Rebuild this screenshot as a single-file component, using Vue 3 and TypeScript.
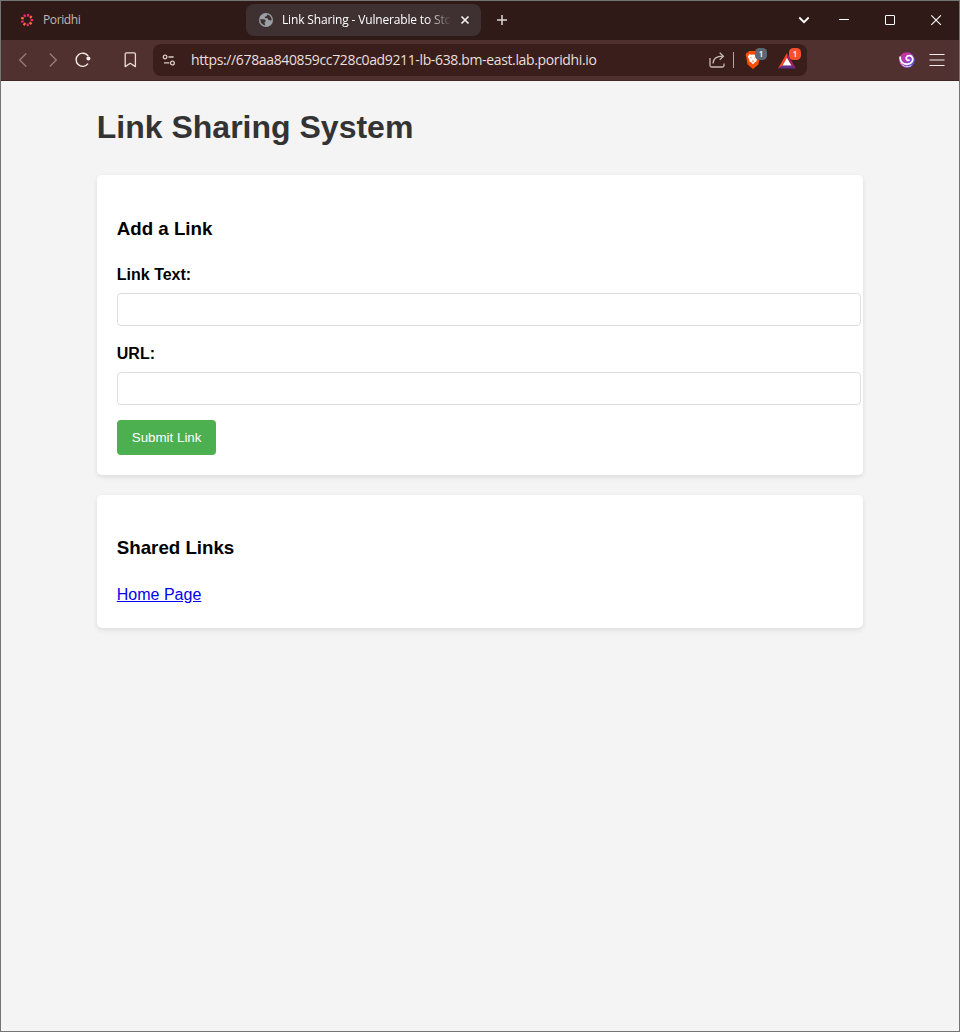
<script setup lang="ts">
import { ref } from 'vue'

interface SharedLink {
  label: string
  url: string
}

const address = 'https://678aa840859cc728c0ad9211-lb-638.bm-east.lab.poridhi.io'
const linkText = ref('')
const linkUrl = ref('')
const links = ref<SharedLink[]>([{ label: 'Home Page', url: '#' }])
const dots = Array.from({ length: 9 }, (_, i) => i * 40)

function submitLink(): void {
  if (!linkText.value || !linkUrl.value) return
  links.value.push({ label: linkText.value, url: linkUrl.value })
  linkText.value = ''
  linkUrl.value = ''
}
</script>

<template>
  <div class="window">
    <header class="tabstrip">
      <div class="tab">
        <svg class="fav" width="14" height="14" viewBox="0 0 14 14">
          <rect
            v-for="(a, i) in dots"
            :key="a"
            x="5.9"
            y="0.8"
            width="2.2"
            height="2.7"
            rx="0.5"
            :fill="i % 2 ? '#fa7040' : '#f4207c'"
            :transform="`rotate(${a + 12} 7 7)`"
          />
        </svg>
        <span class="tab-title dim">Poridhi</span>
      </div>
      <div class="tab active">
        <svg class="globe" width="16" height="16" viewBox="0 0 16 16">
          <circle cx="8" cy="8" r="7" fill="#9aa0a6" />
          <path d="M2.4 7.1 6.8 7.4 8 9 6.5 10.2 7.3 13.5C4 13 2 10.5 2.4 7.1Z" fill="#3f3132" />
          <path d="M9.4 2.6 8.5 4.2 6.7 4.8 7.2 6.3 9.3 6.1 10.5 8 13.6 8.5C13.9 5.6 12.1 3.3 9.4 2.6Z" fill="#3f3132" />
        </svg>
        <span class="tab-title fade">Link Sharing - Vulnerable to Sto</span>
        <svg class="close" width="10" height="10" viewBox="0 0 10 10">
          <path d="M1.5 1.5l7 7M8.5 1.5l-7 7" stroke="#f4eeee" stroke-width="1.7" />
        </svg>
      </div>
      <svg class="plus" width="12" height="12" viewBox="0 0 12 12">
        <path d="M6 1v10M1 6h10" stroke="#ded7d6" stroke-width="1.5" />
      </svg>
      <div class="controls">
        <svg width="43" height="38" viewBox="0 0 43 38">
          <path d="M18.3 16.5l4.7 4.7 4.7-4.7" fill="none" stroke="#fff" stroke-width="1.8" />
        </svg>
        <svg width="43" height="38" viewBox="0 0 43 38"><path d="M15 18.5h10" stroke="#fff" /></svg>
        <svg width="46" height="38" viewBox="0 0 46 38">
          <rect x="18.5" y="14.5" width="9" height="9" rx=".3" fill="none" stroke="#fff" />
        </svg>
        <svg width="46" height="38" viewBox="0 0 46 38">
          <path d="M18.3 14.3l9.6 9.6M27.9 14.3l-9.6 9.6" stroke="#fff" stroke-width="1.1" />
        </svg>
      </div>
    </header>

    <nav class="toolbar">
      <svg class="nav-icons" width="152" height="40" viewBox="0 0 152 40" fill="none">
        <path d="M25.2 13.5l-6.5 6.5 6.5 6.5" stroke="#967f7b" stroke-width="1.3" />
        <path d="M48.8 13.5l6.5 6.5-6.5 6.5" stroke="#967f7b" stroke-width="1.3" />
        <path d="M87 23.7a6.6 6.6 0 1 1 .2-7.6" stroke="#f8f0ee" stroke-width="1.4" />
        <circle cx="87.4" cy="18.4" r="2" fill="#f8f0ee" />
        <path
          d="M124.2 14.1a1.3 1.3 0 0 1 1.3-1.3h7.6a1.3 1.3 0 0 1 1.3 1.3v12.5l-5.1-3.3-5.1 3.3z"
          stroke="#e8dbd8"
          stroke-width="1.3"
          stroke-linejoin="round"
        />
      </svg>
      <div class="address">
        <svg class="tune" width="14" height="14" viewBox="0 0 14 14" fill="none" stroke="#d9cbc8" stroke-width="1.3">
          <circle cx="3.1" cy="4" r="1.8" />
          <path d="M6.4 4h5.3M2 9.9h5.3" />
          <circle cx="10.4" cy="10" r="1.9" />
        </svg>
        <span class="url">{{ address }}</span>
        <svg class="share" width="18" height="18" viewBox="0 0 18 18" fill="none" stroke="#c9bab7" stroke-width="1.3">
          <path d="M2 7v7.5a1.5 1.5 0 0 0 1.5 1.5h11a1.5 1.5 0 0 0 1.5-1.5V12.5" />
          <path d="M5 12.5c.1-4.9 3.1-7.3 9.8-7.3" />
          <path d="M11.7 1.7l3.7 3.5-3.7 3.7" />
        </svg>
        <i class="divider"></i>
        <div class="ext shield">
          <svg width="16" height="18" viewBox="0 0 16 18">
            <path d="M4 0h8l1 1.5 1.5.2 1 2.3-.6 1.3-1.5 8.2L8 18l-5.4-4.5L1.1 5.3.5 4l1-2.3L3 1.5z" fill="#fb4f04" />
            <path
              d="M4.3 3.2 6.4 3.8 8 3.5 9.6 3.8l2.1-.6 1.5 2.5-1.7 3.4.1 1.3-1.6.9-2 2-2-2-1.600-.9.1-1.300-1.700-3.400z"
              fill="#fff"
            />
            <path d="M4.800 6 6.700 6.700 6.400 7.500zM11.200 6 9.300 6.700l.3.8zM6.700 10 8 9.500l1.300.5L8 10.800z" fill="#fb4f04" />
          </svg>
          <b class="badge gray">1</b>
        </div>
        <div class="ext bat">
          <svg width="18" height="16" viewBox="0 0 18 16">
            <path d="M9 0 9 5.2 4.5 12.7 0 15.5z" fill="#ff4724" />
            <path d="M9 0 18 15.5 13.4 12.7 9 5.2z" fill="#9e1f63" />
            <path d="M0 15.5 4.5 12.5h9L18 15.5z" fill="#662d91" />
            <path d="M9 5 13.5 12.6h-9z" fill="#fff" />
          </svg>
          <b class="badge red">1</b>
        </div>
      </div>
      <svg class="swirl" width="16" height="16" viewBox="0 0 16 16">
        <defs>
          <linearGradient id="swirl" x1="0" y1="0" x2="1" y2=".8">
            <stop offset="0" stop-color="#e22d91" />
            <stop offset=".5" stop-color="#b036b8" />
            <stop offset="1" stop-color="#4858e8" />
          </linearGradient>
        </defs>
        <circle cx="8" cy="8" r="7.8" fill="url(#swirl)" />
        <path
          d="M1.200 4.500C.5 9.500 4.200 12.700 8.700 12.200c3.700-.4 5.700-3.300 4.800-6.200-.8-2.700-5.100-3.200-6.100-.5-.7 2.300 1.500 3.500 3.200 2.300"
          fill="none"
          stroke="#fff"
          stroke-width="1.8"
        />
        <path d="M1.700 10.800c2.300 4.100 6.800 5 10.700 2.800" fill="none" stroke="#fff" stroke-width=".8" />
      </svg>
      <svg class="menu" width="16" height="14" viewBox="0 0 16 14">
        <path d="M.5 1.500h15M.5 7h15M.5 12.500h15" stroke="#f3ebe9" stroke-width="1.200" />
      </svg>
    </nav>

    <main class="page">
      <h1>Link Sharing System</h1>
      <section class="card">
        <h3>Add a Link</h3>
        <form @submit.prevent="submitLink">
          <label for="text">Link Text:</label>
          <input id="text" v-model="linkText" type="text" />
          <label for="url">URL:</label>
          <input id="url" v-model="linkUrl" type="text" />
          <button type="submit">Submit Link</button>
        </form>
      </section>
      <section class="card">
        <h3>Shared Links</h3>
        <div v-for="link in links" :key="link.label">
          <a :href="link.url">{{ link.label }}</a>
        </div>
      </section>
    </main>
  </div>
</template>

<style>
body {
  margin: 0;
  background: #f4f4f4;
}
</style>

<style scoped>
.window {
  box-sizing: border-box;
  height: 1032px;
  border: 1px solid #747474;
  background: #f4f4f4;
  overflow: hidden;
}
svg {
  display: block;
  flex: none;
}
.tabstrip {
  display: flex;
  align-items: center;
  height: 39px;
  background: #301a17;
  font-family: 'Open Sans', 'Noto Sans', sans-serif;
}
.tab {
  display: flex;
  align-items: center;
  box-sizing: border-box;
  width: 235px;
  height: 32px;
  padding-left: 9px;
  margin-left: 10px;
  margin-bottom: 1px;
}
.active {
  margin-left: 0;
  background: #3f3132;
  border-radius: 8px;
  padding-left: 12px;
}
.tab-title {
  font-size: 12px;
  line-height: 16px;
  white-space: nowrap;
  color: #fff;
  letter-spacing: -0.16px;
}
.dim {
  margin-left: 9px;
  color: #c1b8b6;
  letter-spacing: -0.4px;
}
.fade {
  width: 168px;
  margin-left: 8px;
  -webkit-mask-image: linear-gradient(90deg, #000 145px, transparent 170px);
  mask-image: linear-gradient(90deg, #000 145px, transparent 170px);
}
.close {
  margin-left: 10px;
}
.plus {
  margin: 0 0 1px 15px;
}
.controls {
  display: flex;
  height: 38px;
  margin: 0 0 1px auto;
}
.toolbar {
  display: flex;
  align-items: center;
  box-sizing: border-box;
  height: 41px;
  background: #51312f;
  border-bottom: 1px solid #402624;
}
.address {
  display: flex;
  align-items: center;
  width: 654px;
  height: 32px;
  background: #391e1b;
  border-radius: 8px;
}
.tune {
  margin-left: 9px;
}
.url {
  width: 518px;
  margin-left: 15px;
  color: #e9dfdd;
  font: 14px/20px 'Open Sans', 'Noto Sans', sans-serif;
  letter-spacing: -0.36px;
  white-space: nowrap;
}
.share {
  margin-left: -1px;
}
.divider {
  width: 1px;
  height: 16px;
  margin-left: 7px;
  background: #b5a6a3;
}
.ext {
  position: relative;
}
.shield {
  margin-left: 11px;
}
.bat {
  margin: 2px 0 0 17px;
}
.badge {
  position: absolute;
  width: 12px;
  height: 12px;
  border-radius: 4.5px;
  color: #fff;
  font: 600 8px/12px 'Open Sans', sans-serif;
  text-align: center;
}
.gray {
  left: 10px;
  top: -3px;
  background: #606774;
}
.red {
  left: 11px;
  top: -5px;
  background: #fb4f2d;
}
.swirl {
  margin-left: 92px;
}
.menu {
  margin-left: 14px;
}
.page {
  width: 80%;
  margin: 0 auto;
  padding-top: 21.44px;
  font: 16px/1.6 'Liberation Sans', Arial, sans-serif;
  color: #000;
}
h1 {
  margin: 0 0 21.44px;
  font-size: 32px;
  color: #333;
}
.card {
  padding: 20px;
  margin-bottom: 20px;
  border-radius: 5px;
  background: #fff;
  box-shadow: 0 2px 5px rgba(0, 0, 0, 0.1);
}
h3 {
  margin: 18.72px 0;
  font-size: 18.72px;
}
label {
  display: block;
  margin-bottom: 5px;
  font-weight: bold;
}
input {
  display: block;
  box-sizing: content-box;
  width: 100%;
  height: 15px;
  padding: 8px;
  margin: 0 0 15px;
  border: 1px solid #ddd;
  border-radius: 4px;
  outline: none;
  background: #fff;
}
button {
  display: block;
  height: 35px;
  padding: 0 15px;
  border: none;
  border-radius: 4px;
  background: #4caf50;
  color: #fff;
  font: 13.333px 'Liberation Sans', Arial, sans-serif;
}
a {
  color: #0000ee;
}
</style>
